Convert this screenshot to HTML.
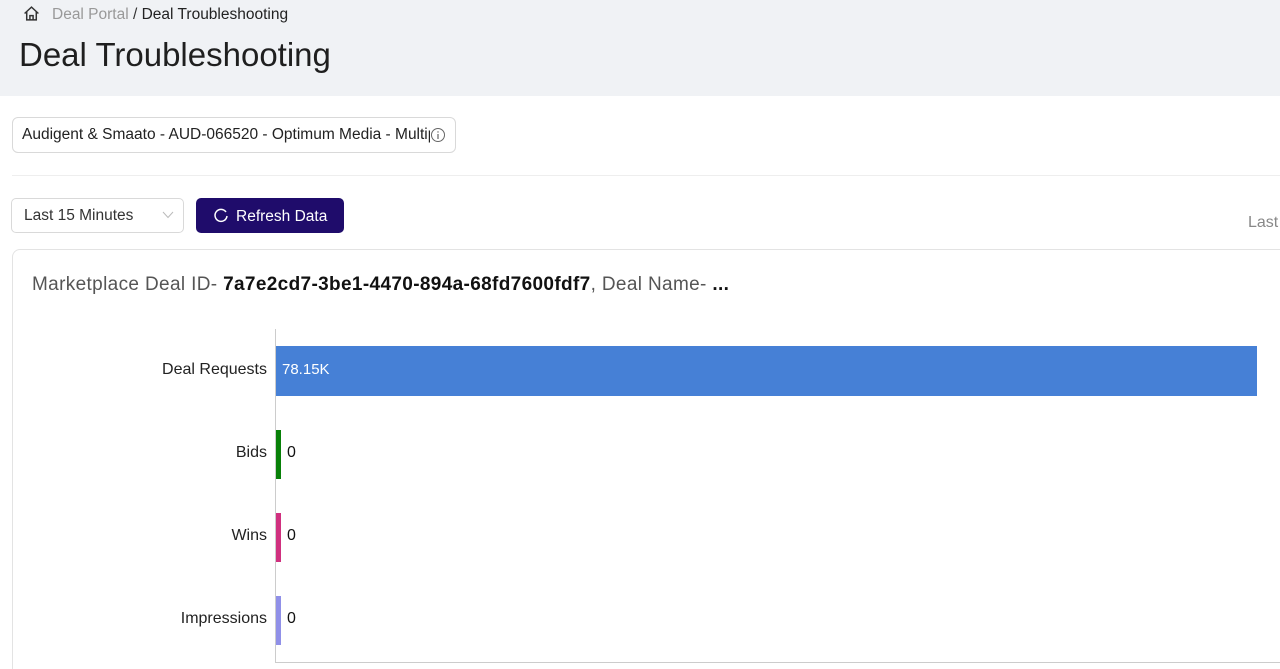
<!DOCTYPE html>
<html style="height:669px;overflow:hidden"><head><style>
*{margin:0;padding:0;box-sizing:border-box}
body{width:1280px;height:669px;overflow:hidden;background:#fff;font-family:"Liberation Sans",Arial,sans-serif;position:relative}
.hdr{position:absolute;left:0;top:0;width:1280px;height:96px;background:#f0f2f5}
.abs{position:absolute;white-space:nowrap}
.seg{font-family:"Liberation Sans",Arial,sans-serif}
</style></head><body>
<div class="hdr"></div>
<svg class="abs" style="left:23px;top:5px" width="17" height="17" viewBox="0 0 16 16" fill="none" stroke="#333" stroke-width="1.4"><path d="M1.5 8 L8 2 L14.5 8 M3.5 6.5 V14 H12.5 V6.5 M6.5 14 V10 H9.5 V14"/></svg>
<div class="abs" style="left:52px;top:6px;font-size:15.5px;color:#999">Deal Portal <span style="color:#333">/</span> <span style="color:#222">Deal Troubleshooting</span></div>
<div class="abs" style="left:19px;top:36px;font-size:33px;color:#1f1f1f">Deal Troubleshooting</div>

<div class="abs" style="left:12px;top:117px;width:444px;height:36px;border:1px solid #d9d9d9;border-radius:6px"></div>
<div class="abs" style="left:22px;top:126px;font-size:15.5px;color:#222;width:408px;overflow:hidden">Audigent &amp; Smaato - AUD-066520 - Optimum Media - Multiple</div>
<svg class="abs" style="left:430px;top:127px" width="16" height="16" viewBox="0 0 16 16"><circle cx="8" cy="8" r="6.5" fill="none" stroke="#666" stroke-width="1"/><rect x="7.4" y="7" width="1.2" height="5" fill="#666"/><rect x="7.4" y="4.3" width="1.2" height="1.3" fill="#666"/></svg>

<div class="abs" style="left:12px;top:175px;width:1268px;height:1px;background:#eee"></div>

<div class="abs" style="left:11px;top:198px;width:173px;height:35px;border:1px solid #d9d9d9;border-radius:5px"></div>
<div class="abs" style="left:24px;top:207px;font-size:15.5px;color:#333">Last 15 Minutes</div>
<svg class="abs" style="left:162px;top:210px" width="12" height="10" viewBox="0 0 12 10"><path d="M1 2 L6 7.5 L11 2" fill="none" stroke="#bbb" stroke-width="1"/></svg>
<div class="abs" style="left:196px;top:198px;width:148px;height:35px;background:#1f0c6b;border-radius:5px"></div>
<svg class="abs" style="left:213px;top:207px" width="16" height="16" viewBox="0 0 16 16"><path d="M13 5 A6 6 0 1 0 14 9" fill="none" stroke="#fff" stroke-width="1.5"/></svg>
<div class="abs" style="left:236px;top:208px;font-size:15.5px;color:#fff">Refresh Data</div>
<div class="abs" style="left:1248px;top:214px;font-size:16px;color:#888">Last</div>

<div class="abs" style="left:12px;top:249px;width:1290px;height:430px;border:1px solid #e3e3e3;border-radius:8px"></div>
<div class="abs seg" style="left:32px;top:274px;font-size:19px;letter-spacing:0.35px;color:#555">Marketplace Deal ID- <b style="color:#111">7a7e2cd7-3be1-4470-894a-68fd7600fdf7</b>, Deal Name- <b style="color:#111">...</b></div>

<div class="abs" style="left:275px;top:329px;width:1px;height:334px;background:#ccc"></div>
<div class="abs" style="left:275px;top:662px;width:1010px;height:1px;background:#ccc"></div>
<div class="abs" style="left:276px;top:346px;width:981px;height:50px;background:#4680d6"></div>
<div class="abs seg" style="left:282px;top:361px;font-size:15px;color:#fff">78.15K</div>
<div class="abs" style="left:276px;top:430px;width:5px;height:49px;background:#088008"></div>
<div class="abs" style="left:276px;top:513px;width:5px;height:49px;background:#d0307f"></div>
<div class="abs" style="left:276px;top:596px;width:5px;height:49px;background:#9090e8"></div>
<div class="abs seg" style="right:1013px;top:361px;font-size:16px;color:#222">Deal Requests</div>
<div class="abs seg" style="right:1013px;top:444px;font-size:16px;color:#222">Bids</div>
<div class="abs seg" style="right:1013px;top:527px;font-size:16px;color:#222">Wins</div>
<div class="abs seg" style="right:1013px;top:610px;font-size:16px;color:#222">Impressions</div>
<div class="abs seg" style="left:287px;top:444px;font-size:16px;color:#111">0</div>
<div class="abs seg" style="left:287px;top:527px;font-size:16px;color:#111">0</div>
<div class="abs seg" style="left:287px;top:610px;font-size:16px;color:#111">0</div>
</body></html>
